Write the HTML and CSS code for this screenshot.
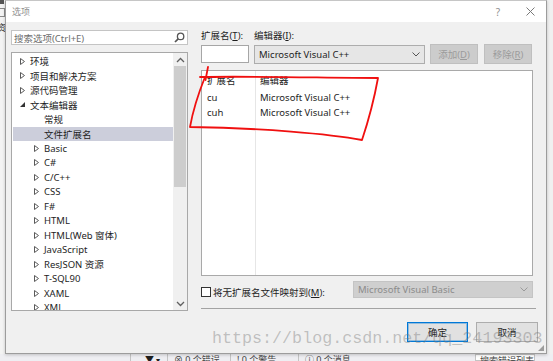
FILE: index.html
```html
<!DOCTYPE html>
<html lang="zh-CN">
<head>
    <meta charset="UTF-8">
    <title>选项</title>
    <link rel="stylesheet" href="styles.css">
</head>
<body>
<svg class="defs" width="0" height="0">
    <symbol id="tri-c" viewBox="0 0 5 7"><path d="M0.5 0.5 L4.5 3.5 L0.5 6.5 Z" fill="#fff" stroke="#5a5a5a" stroke-width="1"/></symbol>
    <symbol id="tri-e" viewBox="0 0 5 6"><path d="M5 0.5 L5 5.5 L0 5.5 Z" fill="#333"/></symbol>
    <symbol id="chev-up" viewBox="0 0 9 6"><polyline points="1,5 4.5,1.5 8,5" fill="none" stroke="#606060" stroke-width="1.3"/></symbol>
    <symbol id="chev-down" viewBox="0 0 9 6"><polyline points="1,1 4.5,4.5 8,1" fill="none" stroke="#606060" stroke-width="1.3"/></symbol>
</svg>

<div class="desk">
    <div class="back-left">
        <span class="bl-icon"></span>
        <span class="bl-box"></span>
        <span class="bl-char">资</span>
    </div>
    <div class="back-bottom">
        <span class="bb-item bb-filter">▼ <small>▾</small></span>
        <span class="bb-item">⊗ 0 个错误</span>
        <span class="bb-item">! 0 个警告</span>
        <span class="bb-item">ⓘ 0 个消息</span>
        <span class="bb-search">搜索错误列表</span>
    </div>

    <div class="dialog">
        <div class="titlebar">
            <span class="title">选项</span>
            <span class="help">?</span>
            <svg class="close" width="9" height="9" viewBox="0 0 9 9"><path d="M0.5 0.5 L8.5 8.5 M8.5 0.5 L0.5 8.5" stroke="#7a7a7a" stroke-width="1"/></svg>
        </div>
        <div class="main">
            <div class="left">
                <div class="search">
                    <span>搜索选项(Ctrl+E)</span>
                    <svg width="11" height="11" viewBox="0 0 11 11"><circle cx="6.6" cy="4.4" r="3.2" fill="none" stroke="#555" stroke-width="1.3"/><path d="M4.2 6.8 L1 10" stroke="#555" stroke-width="1.7"/></svg>
                </div>
                <div class="tree">
                    <div class="nodes">
                        <div class="node l1"><svg class="tw"><use href="#tri-c"/></svg>环境</div>
                        <div class="node l1"><svg class="tw"><use href="#tri-c"/></svg>项目和解决方案</div>
                        <div class="node l1"><svg class="tw"><use href="#tri-c"/></svg>源代码管理</div>
                        <div class="node l1"><svg class="tw"><use href="#tri-e"/></svg>文本编辑器</div>
                        <div class="node leaf">常规</div>
                        <div class="node leaf sel">文件扩展名</div>
                        <div class="node l2"><svg class="tw"><use href="#tri-c"/></svg>Basic</div>
                        <div class="node l2"><svg class="tw"><use href="#tri-c"/></svg>C#</div>
                        <div class="node l2"><svg class="tw"><use href="#tri-c"/></svg>C/C++</div>
                        <div class="node l2"><svg class="tw"><use href="#tri-c"/></svg>CSS</div>
                        <div class="node l2"><svg class="tw"><use href="#tri-c"/></svg>F#</div>
                        <div class="node l2"><svg class="tw"><use href="#tri-c"/></svg>HTML</div>
                        <div class="node l2"><svg class="tw"><use href="#tri-c"/></svg>HTML(Web 窗体)</div>
                        <div class="node l2"><svg class="tw"><use href="#tri-c"/></svg>JavaScript</div>
                        <div class="node l2"><svg class="tw"><use href="#tri-c"/></svg>ResJSON 资源</div>
                        <div class="node l2"><svg class="tw"><use href="#tri-c"/></svg>T-SQL90</div>
                        <div class="node l2"><svg class="tw"><use href="#tri-c"/></svg>XAML</div>
                        <div class="node l2"><svg class="tw"><use href="#tri-c"/></svg>XML</div>
                    </div>
                    <div class="scroll">
                        <div class="sb-btn"><svg width="9" height="6"><use href="#chev-up"/></svg></div>
                        <div class="thumb"></div>
                        <div class="track"></div>
                        <div class="sb-btn"><svg width="9" height="6"><use href="#chev-down"/></svg></div>
                    </div>
                </div>
            </div>

            <div class="right">
                <div class="labels">
                    <span class="lab-ext">扩展名(<u>T</u>):</span>
                    <span>编辑器(<u>I</u>):</span>
                </div>
                <div class="controls">
                    <div class="ext-input"></div>
                    <div class="combo">
                        <span>Microsoft Visual C++</span>
                        <svg width="8" height="5" viewBox="0 0 8 5"><polyline points="0.5,0.5 4,4 7.5,0.5" fill="none" stroke="#555" stroke-width="1"/></svg>
                    </div>
                    <div class="btn-dis">添加(<u>D</u>)</div>
                    <div class="btn-dis gap">移除(<u>R</u>)</div>
                </div>
                <div class="list">
                    <div class="col1">
                        <div class="lh">扩展名</div>
                        <div class="lr">cu</div>
                        <div class="lr">cuh</div>
                    </div>
                    <div class="col2">
                        <div class="lh">编辑器</div>
                        <div class="lr">Microsoft Visual C++</div>
                        <div class="lr">Microsoft Visual C++</div>
                    </div>
                </div>
                <div class="map">
                    <span class="chk"></span>
                    <span>将无扩展名文件映射到(<u>M</u>):</span>
                    <div class="combo dis">
                        <span>Microsoft Visual Basic</span>
                        <svg width="8" height="5" viewBox="0 0 8 5"><polyline points="0.5,0.5 4,4 7.5,0.5" fill="none" stroke="#9a9a9a" stroke-width="1"/></svg>
                    </div>
                </div>
                <div class="sep"></div>
                <div class="actions">
                    <div class="btn primary">确定</div>
                    <div class="btn">取消</div>
                </div>
            </div>
        </div>
        <div class="grip"></div>
    </div>

    <svg class="scribble" width="553" height="361" viewBox="0 0 553 361">
        <path d="M208 67 L205.5 80" fill="none" stroke="#f01010" stroke-width="1.8" stroke-linecap="round"/>
        <path d="M200 77 C260 76 330 78 378 78 C374 100 368 122 362 140 C330 134 262 128 190 127 C193 110 199 92 205 77" fill="none" stroke="#f01010" stroke-width="1.8" stroke-linecap="round" stroke-linejoin="round"/>
    </svg>
    <div class="watermark">https://blog.csdn.net/qq_24193303</div>
</div>
</body>
</html>
```

FILE: styles.css
```css
* { box-sizing: border-box; }
body { margin: 0; font-family: "Noto Sans", "Noto Sans CJK SC", sans-serif; font-size: 9.5px; color: #1e1e1e; background: #f0f0f0; }
.defs { position: absolute; }
.desk { position: relative; width: 553px; height: 361px; overflow: hidden; background: #f0f0f0; }

/* windows behind the dialog */
.back-left { position: absolute; left: 0; top: 0; width: 6px; height: 354px; background: #f3f3f3; overflow: hidden; }
.bl-icon { position: absolute; left: 0; top: 0; width: 4px; height: 4px; background: #555; }
.bl-box { position: absolute; left: -2px; top: 8px; width: 7px; height: 9px; border: 1px solid #8a8a8a; }
.bl-char { position: absolute; left: -3px; top: 21px; font-size: 9px; color: #333; }
.back-bottom { position: absolute; left: 0; top: 354px; width: 553px; height: 7px; background: #eeeef2; overflow: hidden; display: flex; padding-left: 130px; line-height: 12px; color: #444; font-size: 9px; }
.bb-item { border-left: 1px solid #c4c4c4; padding: 0 6px; margin-top: 0; white-space: nowrap; }
.bb-filter { width: 37px; color: #1e1e1e; padding-left: 14px; }
.bb-item:nth-child(2) { width: 63px; }
.bb-item:nth-child(3) { width: 68px; }
.bb-search { margin-left: auto; margin-right: 18px; width: 60px; border: 1px solid #c4c4c4; background: #fff; padding-left: 4px; }

/* dialog */
.dialog { position: absolute; left: 5px; top: 0; width: 542px; height: 354px; background: #f0f0f0; border: 1px solid #9c9c9c; border-top-color: #c6c6c6; box-shadow: 0 1px 3px rgba(0,0,0,0.2); display: flex; flex-direction: column; }
.titlebar { flex: none; height: 21px; background: #fff; display: flex; align-items: center; padding: 0 11px 0 6px; color: #8f8f8f; }
.title { flex: 1; font-size: 9px; }
.help { width: 10px; text-align: center; font-size: 10px; margin-right: 23px; }
.main { display: flex; gap: 13px; padding: 8px 7px 0 5px; }

.left { width: 177px; display: flex; flex-direction: column; gap: 7px; }
.search { height: 15px; background: #fff; border: 1px solid #c4c4c4; display: flex; align-items: center; justify-content: space-between; padding: 0 2px 0 2px; color: #6d6d6d; }
.tree { height: 259px; background: #fff; border: 1px solid #a8a8a8; display: flex; overflow: hidden; }
.nodes { flex: 1; padding-top: 1px; }
.node { height: 14.5px; display: flex; align-items: center; white-space: nowrap; }
.tw { width: 5px; height: 7px; margin-right: 5px; flex: none; }
.l1 { padding-left: 8px; }
.l2 { padding-left: 22px; }
.leaf { padding-left: 32px; }
.sel { background: #cccedb; margin-left: 1px; padding-left: 31px; }
.scroll { width: 14px; background: #f0f0f0; display: flex; flex-direction: column; }
.sb-btn { height: 13px; display: flex; align-items: center; justify-content: center; flex: none; }
.thumb { height: 121px; margin: 0 1px; background: #cdcdcd; flex: none; }
.track { flex: 1; }

.right { width: 337px; display: flex; flex-direction: column; }
.labels { display: flex; height: 14px; line-height: 11px; }
.lab-ext { width: 53px; }
.controls { display: flex; gap: 5px; height: 20px; align-items: center; }
.ext-input { width: 48px; height: 18px; background: #fff; border: 1px solid #a6a6a6; }
.combo { width: 171px; height: 19px; background: #e6e6e6; border: 1px solid #adadad; display: flex; align-items: center; justify-content: space-between; padding: 0 4px 0 4px; }
.btn-dis { width: 48px; height: 20px; background: #cccccc; border: 1px solid #bfbfbf; color: #9b9b9b; display: flex; align-items: center; justify-content: center; }
.btn-dis.gap { margin-left: 1px; }
.list { margin-top: 6px; height: 206px; width: 332px; background: #fff; border: 1px solid #a9a9a9; display: flex; }
.col1 { width: 54px; border-right: 1px solid #e6e6e6; }
.col2 { flex: 1; }
.lh { height: 19px; padding: 3px 0 0 5px; line-height: 14px; }
.lr { height: 15px; line-height: 15px; padding-left: 5px; }
.col2 .lh, .col2 .lr { padding-left: 4px; }
.map { margin-top: 5px; display: flex; align-items: center; height: 17px; width: 332px; }
.chk { width: 10px; height: 10px; border: 1px solid #333; background: #fff; margin: 4px 2px 0 0; }
.map > span:nth-child(2) { margin-top: 4px; }
.combo.dis { margin-left: auto; width: 180px; height: 17px; background: #cfcfcf; border-color: #c4c4c4; color: #8b8b8b; }
.sep { margin-top: 10px; height: 1px; width: 335px; background: #a3a3a3; }
.actions { margin-top: 13px; display: flex; justify-content: flex-end; gap: 8px; }
.btn { width: 62px; height: 20px; background: #e1e1e1; border: 1px solid #adadad; display: flex; align-items: center; justify-content: center; }
.btn.primary { width: 61px; border-color: #0078d7; box-shadow: inset 0 0 0 1px rgba(0,120,215,0.35); }
.grip { position: absolute; right: 2px; bottom: 2px; width: 6px; height: 6px; background: radial-gradient(circle, #9a9a9a 0.7px, transparent 0.9px) 0 0 / 2px 2px; clip-path: polygon(100% 0, 100% 100%, 0 100%); }

/* overlays */
.scribble { position: absolute; left: 0; top: 0; pointer-events: none; }
.watermark { position: absolute; left: 212px; top: 330px; font-family: "Liberation Mono", monospace; font-size: 16.7px; line-height: 17px; color: rgba(120,120,120,0.42); white-space: nowrap; pointer-events: none; }
```
